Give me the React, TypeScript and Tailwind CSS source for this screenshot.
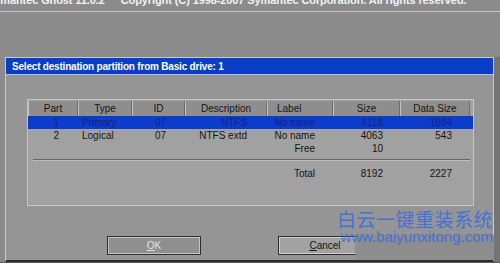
import React from "react";

const cols = [
  { w: "w-[50px] justify-center", h: "Part" },
  { w: "w-[54px] justify-center", h: "Type" },
  { w: "w-[53px] justify-center", h: "ID" },
  { w: "w-[82px] justify-center", h: "Description" },
  { w: "w-[66px] justify-start pl-[9px]", h: "Label" },
  { w: "w-[67px] justify-center", h: "Size" },
  { w: "w-[70px] justify-center", h: "Data Size" },
];

type Row = [string, string, string, string, string, string, string];

function DataRow({ r, sel }: { r: Row; sel?: boolean }) {
  return (
    <div className={`flex h-[13px] items-center leading-[13px] ${sel ? "bg-[#0c3ccc] text-[#15217c] w-full" : "text-[#141414]"}`}>
      <div className="w-[50px] text-right pr-[19px]">{r[0]}</div>
      <div className="w-[54px] text-left pl-[4px]">{r[1]}</div>
      <div className="w-[53px] text-right pr-[19px]">{r[2]}</div>
      <div className="w-[82px] text-right pr-[20px]">{r[3]}</div>
      <div className="w-[66px] text-right pr-[18px]">{r[4]}</div>
      <div className="w-[67px] text-right pr-[17px]">{r[5]}</div>
      <div className="w-[70px] text-right pr-[18px]">{r[6]}</div>
    </div>
  );
}

export default function App() {
  return (
    <div
      className="relative w-[500px] h-[263px] overflow-hidden bg-[#8b8b8b]"
      style={{ fontFamily: '"Liberation Sans", Arial, sans-serif' }}
    >
      {/* top banner */}
      <div className="h-[12px] border-b border-[#c4c4c4] overflow-hidden">
        <div className="flex -mt-[6px] ml-[-13px] text-[11px] leading-[12px] font-bold text-[#f2f2f2] whitespace-nowrap tracking-[-0.1px]">
          <span>Symantec Ghost 11.0.2</span>
          <span className="ml-[16px]">Copyright (C) 1998-2007 Symantec Corporation. All rights reserved.</span>
        </div>
      </div>

      <div className="flex mt-[45px] h-[205px]">
        {/* dialog */}
        <div className="ml-[5px] w-[489px] flex flex-col border-l border-t border-r border-[#c9c9c9] border-b-2 border-b-[#2c2c2c] bg-[#959595]">
          <div className="h-[17px] bg-[#0b3ec6] border-b border-[#b4bce0] flex items-center pl-[6px] text-[10px] font-bold text-white whitespace-nowrap tracking-[-0.2px]">
            Select destination partition from Basic drive: 1
          </div>

          {/* table box */}
          <div className="ml-[21px] mt-[24px] w-[447px] h-[107px] border border-[#c6c6c6] bg-[#a1a1a1] text-[10px]">
            <div className="mt-[1px] flex h-[15px]">
              {cols.map((c) => (
                <div
                  key={c.h}
                  className={`${c.w} h-full bg-[#8e8e8e] border-l border-[#c2c2c2] border-r border-r-[#6c6c6c] flex items-center text-[#151515] leading-[15px]`}
                >
                  {c.h}
                </div>
              ))}
            </div>
            <DataRow sel r={["1", "Primary", "07", "NTFS", "No name", "4118", "1684"]} />
            <DataRow r={["2", "Logical", "07", "NTFS extd", "No name", "4063", "543"]} />
            <DataRow r={["", "", "", "", "Free", "10", ""]} />
            <div className="mt-[4px] ml-[5px] mr-[3px] h-[2px] border-t border-[#666666] border-b border-b-[#bdbdbd]" />
            <div className="mt-[6px]">
              <DataRow r={["", "", "", "", "Total", "8192", "2227"]} />
            </div>
          </div>

          {/* buttons */}
          <div className="mt-[30px] flex">
            <div className="ml-[101px] w-[94px] h-[19px] border border-[#2e2e2e] bg-[#8f8f8f] shadow-[inset_1px_1px_0_#c4c4c4,inset_-1px_-1px_0_#c4c4c4] flex items-center justify-center text-[10px] text-[#e4e4e4]">
              <span><span className="underline">O</span>K</span>
            </div>
            <div className="ml-[77px] w-[94px] h-[19px] border border-[#2e2e2e] bg-[#a2a2a2] shadow-[inset_1px_1px_0_#d0d0d0,inset_-1px_-1px_0_#d0d0d0] flex items-center justify-center text-[10px] text-[#111]">
              <span><span className="underline">C</span>ancel</span>
            </div>
          </div>
        </div>
        {/* right strip */}
        <div className="flex-1 bg-[#747474]" />
      </div>
      <div className="h-[2px] bg-[#5a5a5a]" />

      {/* watermark patch + text */}
      <div className="absolute left-[355px] top-[235px] w-[139px] h-[25px] bg-[#8d8d8d]" />
      <div className="absolute left-[337px] top-[208px] flex flex-col items-end text-[#3a6ee0] opacity-90">
        <div
          className="text-[19px] leading-[22px] tracking-[0.5px]"
          style={{ fontFamily: '"Noto Sans CJK SC", sans-serif' }}
        >
          白云一键重装系统
        </div>
        <div className="text-[15px] leading-[15px] -mt-[1px]">www.baiyunxitong.com</div>
      </div>
    </div>
  );
}
